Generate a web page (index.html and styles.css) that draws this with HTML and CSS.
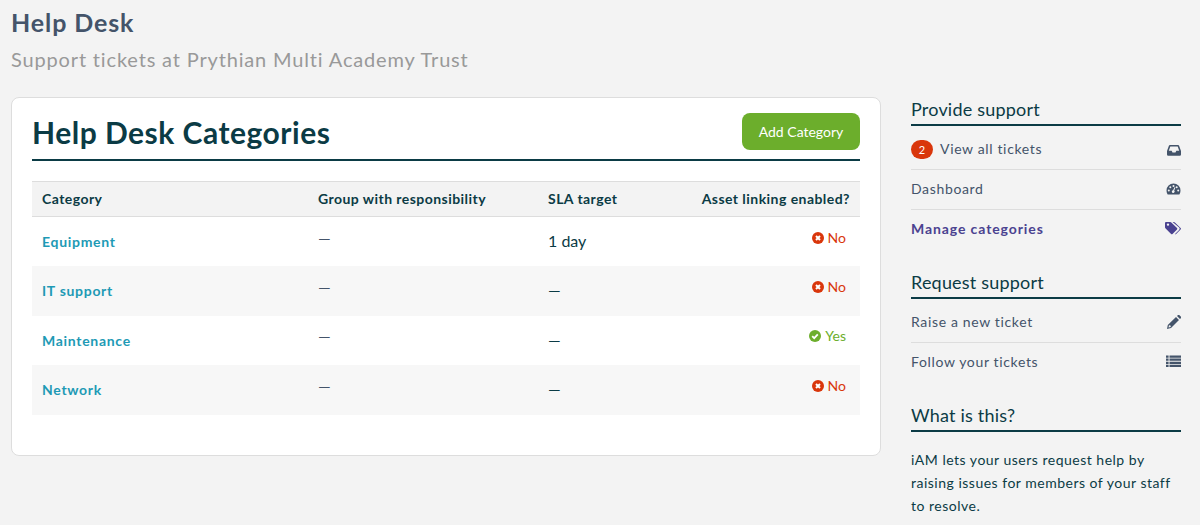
FILE: index.html
```html
<!DOCTYPE html>
<html lang="en">
<head>
    <meta charset="UTF-8">
    <title>Help Desk</title>
    <link rel="stylesheet" href="styles.css">
</head>
<body>
    <header class="page-head">
        <h1>Help Desk</h1>
        <p>Support tickets at Prythian Multi Academy Trust</p>
    </header>

    <div class="layout">
        <main class="card">
            <div class="card-head">
                <h2>Help Desk Categories</h2>
                <a class="btn" href="#">Add Category</a>
            </div>

            <table class="table">
                <thead>
                    <tr>
                        <th class="col-name">Category</th>
                        <th class="col-group">Group with responsibility</th>
                        <th class="col-sla">SLA target</th>
                        <th class="col-asset">Asset linking enabled?</th>
                    </tr>
                </thead>
                <tbody>
                    <tr>
                        <td><a href="#">Equipment</a></td>
                        <td class="none">—</td>
                        <td>1 day</td>
                        <td class="status no">
                            <svg class="status-icon" viewBox="0 0 12 12"><circle cx="6" cy="6" r="6" fill="currentColor"/><path d="M4 4l4 4M8 4l-4 4" stroke="#fff" stroke-width="2"/></svg>No
                        </td>
                    </tr>
                    <tr>
                        <td><a href="#">IT support</a></td>
                        <td class="none">—</td>
                        <td>—</td>
                        <td class="status no">
                            <svg class="status-icon" viewBox="0 0 12 12"><circle cx="6" cy="6" r="6" fill="currentColor"/><path d="M4 4l4 4M8 4l-4 4" stroke="#fff" stroke-width="2"/></svg>No
                        </td>
                    </tr>
                    <tr>
                        <td><a href="#">Maintenance</a></td>
                        <td class="none">—</td>
                        <td>—</td>
                        <td class="status yes">
                            <svg class="status-icon" viewBox="0 0 12 12"><circle cx="6" cy="6" r="6" fill="currentColor"/><path d="M3.200 6.200l2 2 3.600-3.800" fill="none" stroke="#fff" stroke-width="1.800"/></svg>Yes
                        </td>
                    </tr>
                    <tr>
                        <td><a href="#">Network</a></td>
                        <td class="none">—</td>
                        <td>—</td>
                        <td class="status no">
                            <svg class="status-icon" viewBox="0 0 12 12"><circle cx="6" cy="6" r="6" fill="currentColor"/><path d="M4 4l4 4M8 4l-4 4" stroke="#fff" stroke-width="2"/></svg>No
                        </td>
                    </tr>
                </tbody>
            </table>
        </main>

        <aside class="sidebar">
            <h3>Provide support</h3>
            <ul class="side-nav">
                <li class="with-badge">
                    <a href="#"><span class="badge">2</span>View all tickets</a>
                    <svg class="nav-icon icon-inbox" viewBox="0 0 14 14"><path fill-rule="evenodd" d="M3 2h8q.8 0 1.100.8l1.900 5.200v3.500q0 1.200-1.200 1.200H1.200Q0 12.700 0 11.500V8l1.900-5.200Q2.200 2 3 2zM3.300 3.500L1.800 7.800h2.900l.8 1.600h3l.8-1.600h2.900l-1.500-4.300z"/></svg>
                </li>
                <li>
                    <a href="#">Dashboard</a>
                    <svg class="nav-icon icon-wide" viewBox="0 0 14 14"><path fill-rule="evenodd" d="M7 1.500a7 7 0 0 1 7 7q0 2.100-1 3.800-.2.300-.6.300H1.600q-.4 0-.6-.3-1-1.700-1-3.800a7 7 0 0 1 7-7zM7 3a1 1 0 1 0 0 2 1 1 0 0 0 0-2zM3.800 4.300a1 1 0 1 0 0 2 1 1 0 0 0 0-2zM10.200 4.300a1 1 0 1 0 0 2 1 1 0 0 0 0-2zM2.300 7.600a1 1 0 1 0 0 2 1 1 0 0 0 0-2zM11.700 7.600a1 1 0 1 0 0 2 1 1 0 0 0 0-2zM8 5.300L6.600 8.200a1.400 1.400 0 1 0 1.100.4L8.900 5.600z"/></svg>
                </li>
                <li class="active">
                    <a href="#">Manage categories</a>
                    <svg class="nav-icon icon-tags" viewBox="0 0 16 14"><path fill-rule="evenodd" d="M1 1h4.300q.6 0 1 .4l5.700 5.700q.7.700 0 1.400L7.500 13q-.7.700-1.400 0L.4 7.300Q0 6.900 0 6.300V2q0-1 1-1zM3 2.400a1.200 1.200 0 1 0 0 2.400 1.200 1.200 0 0 0 0-2.400z"/><path d="M7.600 1h1.300q.6 0 1 .4l5.700 5.700q.7.700 0 1.400L11.100 13q-.6.600-1.300.2l4.300-4.300q1.100-1.200 0-2.300z"/></svg>
                </li>
            </ul>

            <h3>Request support</h3>
            <ul class="side-nav">
                <li>
                    <a href="#">Raise a new ticket</a>
                    <svg class="nav-icon" viewBox="0 0 14 14"><path fill-rule="evenodd" d="M9 2l3 3-8 8-4 1 .8-4zM2 10.200l-.5 2.300 2.300-.5-.3-1.500zM10 1L11 0q.6-.4 1.200 0l1.800 1.800q.4.600 0 1.200l-1 1z"/></svg>
                </li>
                <li>
                    <a href="#">Follow your tickets</a>
                    <svg class="nav-icon icon-wide" viewBox="0 0 15 14"><path d="M0 1.500h2.600v2.200H0zM3.500 1.500H15v2.200H3.500zM0 4.600h2.600v2.200H0zM3.500 4.600H15v2.200H3.500zM0 7.700h2.600v2.200H0zM3.500 7.700H15v2.200H3.500zM0 10.800h2.600V13H0zM3.500 10.800H15V13H3.500z"/></svg>
                </li>
            </ul>

            <h3>What is this?</h3>
            <p class="side-text">iAM lets your users request help by raising issues for members of your staff to resolve.</p>
        </aside>
    </div>
</body>
</html>
```

FILE: styles.css
```css
body {
    font-family: 'Lato', 'Open Sans', sans-serif;
    margin: 0;
    padding: 0 19px 0 11px;
    background: #f3f3f3;
    color: #0b3b45;
}
a {
    color: inherit;
    text-decoration: none;
}
.page-head {
    height: 97px;
    padding-top: 7px;
    box-sizing: border-box;
}
.page-head h1 {
    margin: 0;
    font-size: 25px;
    line-height: 30px;
    font-weight: 700;
    color: #44546a;
    letter-spacing: 0.9px;
}
.page-head p {
    margin: 9px 0 0;
    font-size: 20px;
    line-height: 26px;
    color: #999;
    letter-spacing: 0.84px;
}
.layout {
    display: grid;
    grid-template-columns: 870px 270px;
    gap: 30px;
    align-items: start;
}
.card {
    height: 359px;
    box-sizing: border-box;
    padding: 15px 20px 0;
    background: white;
    border: 1px solid #ddd;
    border-radius: 8px;
}
.card-head {
    display: flex;
    justify-content: space-between;
    align-items: flex-start;
    height: 46px;
    border-bottom: 2px solid #0b3b45;
}
.card-head h2 {
    margin: 0;
    font-size: 30px;
    line-height: 38px;
    font-weight: 700;
    letter-spacing: 0.5px;
}
.btn {
    display: block;
    width: 118px;
    line-height: 37px;
    text-align: center;
    background: #6cae2c;
    color: white;
    font-size: 14px;
    border-radius: 8px;
    letter-spacing: 0;
}
.table {
    width: 100%;
    margin-top: 20px;
    border-collapse: collapse;
    table-layout: fixed;
}
.table th {
    height: 35px;
    padding: 0 10px 2px;
    box-sizing: border-box;
    text-align: left;
    font-size: 14px;
    font-weight: 700;
    letter-spacing: 0.45px;
    background: #f3f3f3;
    border-top: 1px solid #ddd;
    border-bottom: 1px solid #ddd;
}
.col-name { width: 276px; }
.col-group { width: 230px; }
.col-sla { width: 130px; }
.table th.col-asset { text-align: right; }
.table td {
    height: 49.500px;
    padding: 0 10px 2px;
    box-sizing: border-box;
    font-size: 16px;
}
.table tbody tr:nth-child(even) td {
    background: #f7f7f7;
}
.table td a {
    color: #1e9ab5;
    font-size: 14px;
    font-weight: 700;
    letter-spacing: 0.7px;
}
.table td.none {
    padding-bottom: 9px;
    color: #44546a;
}
.table td.status {
    padding: 0 14px 9px 0;
    text-align: right;
    font-size: 14px;
}
.no { color: #d9360b; }
.yes { color: #6cae2c; }
.status-icon {
    width: 12px;
    height: 12px;
    margin-right: 4px;
    vertical-align: -1px;
}
.sidebar h3 {
    margin: 0;
    height: 27px;
    font-size: 18px;
    line-height: 24px;
    font-weight: 400;
    letter-spacing: 0.2px;
    border-bottom: 2px solid #0b3b45;
}
.side-nav {
    margin: 4px 0 20px;
    padding: 0;
    list-style: none;
}
.side-nav li {
    display: flex;
    justify-content: space-between;
    align-items: center;
    height: 40px;
    box-sizing: border-box;
    padding-bottom: 2px;
    border-bottom: 1px solid #ddd;
    font-size: 14px;
    letter-spacing: 0.65px;
    color: #44546a;
}
.side-nav li.with-badge {
    padding-bottom: 0;
}
.side-nav li:last-child {
    padding-bottom: 4px;
    border-bottom: none;
}
.side-nav li.active {
    color: #4a4290;
    font-weight: 700;
    letter-spacing: 0.9px;
}
.badge {
    display: inline-block;
    width: 22px;
    margin-right: 7px;
    line-height: 19px;
    text-align: center;
    font-size: 11px;
    letter-spacing: 0;
    color: white;
    background: #d9360b;
    border-radius: 10px;
}
.nav-icon {
    width: 14px;
    height: 14px;
    fill: currentColor;
}
.icon-wide {
    width: 15px;
}
.icon-tags {
    width: 16px;
}
.side-text {
    margin: 16px 0 0;
    font-size: 14px;
    line-height: 23px;
    letter-spacing: 0.5px;
}
```
